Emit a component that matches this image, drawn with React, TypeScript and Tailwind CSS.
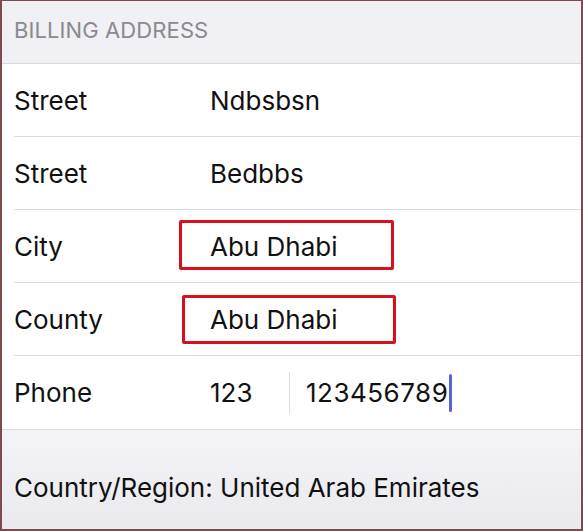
import React from "react";

const rows = [
  { label: "Street", value: "Ndbsbsn" },
  { label: "Street", value: "Bedbbs" },
  { label: "City", value: "Abu Dhabi", box: "left-[-31px] right-[-56px] top-[-7px] bottom-[-4px]" },
  { label: "County", value: "Abu Dhabi", box: "left-[-28px] right-[-58px] top-[-5px] bottom-[-5px]" },
];

export default function App() {
  return (
    <main
      className="w-[583px] h-[531px] flex flex-col bg-white border-x-2 border-b-2 border-t border-[#7d4b4e] overflow-hidden"
      style={{ fontFamily: "Inter, 'Liberation Sans', sans-serif" }}
    >
      <div className="h-[63px] shrink-0 bg-[#f0f0f5] border-b border-[#d9d9de] flex items-center px-3 pb-[3px]">
        <h2 className="text-[22px] text-[#8a8a8f] tracking-[0.1px]">BILLING ADDRESS</h2>
      </div>

      <div className="flex flex-col">
        {rows.map((r, i) => (
          <div key={i} className="h-[73px] shrink-0 flex items-center pl-3 relative">
            <span className="w-[196px] text-[26px] leading-[39px] text-[#111]">{r.label}</span>
            <span className="relative text-[26px] leading-[39px] text-[#111]">
              {r.value}
              {r.box && (
                <span className={"absolute border-[3px] border-[#d8101e] rounded-[2px] " + r.box} />
              )}
            </span>
            <div className="absolute bottom-0 left-3 right-0 h-px bg-[#dcdce0]" />
          </div>
        ))}
        <div className="h-[73px] shrink-0 flex items-center pl-3">
          <span className="w-[196px] text-[26px] text-[#111]">Phone</span>
          <span className="w-[79px] text-[26px] text-[#111]">123</span>
          <span className="w-px h-[42px] bg-[#dcdce0] mr-4" />
          <span className="text-[26px] tracking-[0.5px] text-[#111]">123456789</span>
          <span className="w-[3px] h-[38px] bg-[#5864d4] rounded-full ml-[1px]" />
        </div>
      </div>

      <div className="flex-1 bg-gradient-to-b from-[#f3f3f8] to-[#e9e9ee] border-t border-[#d9d9de] flex items-end pl-3 pb-[22px]">
        <p className="text-[26px] text-[#111]">Country/Region: United Arab Emirates</p>
      </div>
    </main>
  );
}
